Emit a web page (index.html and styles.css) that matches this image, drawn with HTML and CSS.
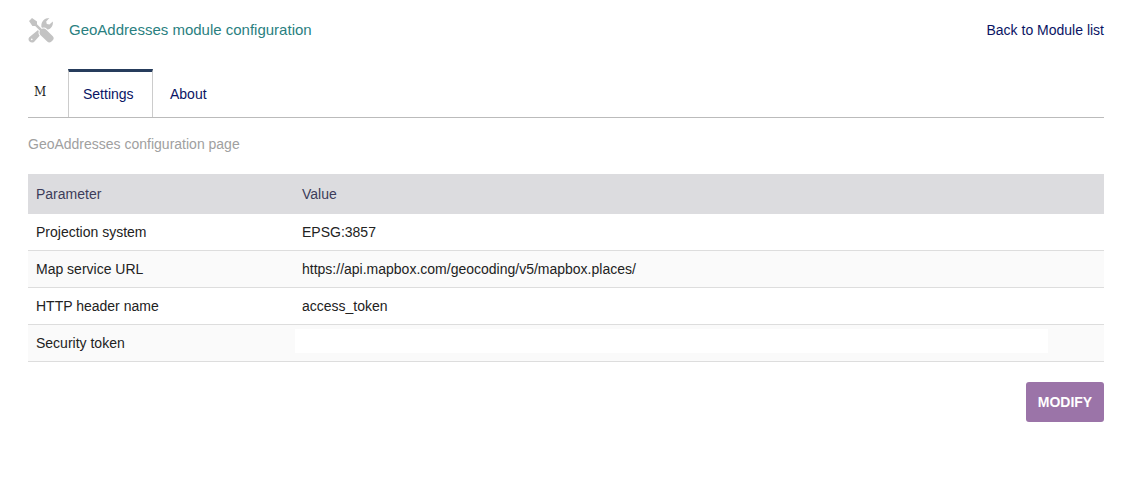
FILE: index.html
```
<!doctype html>
<html lang="en">
<head>
    <meta charset="utf-8">
    <meta name="viewport" content="width=device-width, initial-scale=1">
    <title>GeoAddresses module configuration</title>
    <link rel="stylesheet" href="styles.css">
</head>
<body>
    <div class="page-title">
        <svg class="title-icon" width="26" height="26" viewBox="0 0 26 26" aria-hidden="true">
            <!-- wrench -->
            <path class="tool" d="M1.2 20.2 L13.4 10.2 C12.8 5 16 1 21.4 1 L18.2 4.4 L18.8 7 L21.4 7.6 L24.8 4.4 C25.6 9.4 22 13.4 17 12.8 L6 25 C3 27 -1.2 23.6 1.2 20.2Z"/>
            <circle class="hole" cx="3.8" cy="22.4" r="0.8"/>
            <!-- screwdriver -->
            <path class="gap" d="M4 1 L9 4.4 V7.2 L13.8 12 C15.4 11.2 17 11.4 18 12.4 L24.8 19.2 C26 20.6 26 22 24.8 23.2 L23.2 24.8 C22 25.8 20.4 25.8 19.2 24.6 L12.4 18 C11.4 16.8 11.2 15.2 12 13.8 L7.2 9 H4.4 L1 4Z"/>
            <path class="tool" d="M4 1 L9 4.4 V7.2 L13.8 12 C15.4 11.2 17 11.4 18 12.4 L24.8 19.2 C26 20.6 26 22 24.8 23.2 L23.2 24.8 C22 25.8 20.4 25.8 19.2 24.6 L12.4 18 C11.4 16.8 11.2 15.2 12 13.8 L7.2 9 H4.4 L1 4Z"/>
        </svg>
        <h1>GeoAddresses module configuration</h1>
        <a class="back" href="#">Back to Module list</a>
    </div>

    <nav class="tabs">
        <span class="tabs-mark">M</span>
        <a class="tab tab-active" href="#" aria-current="page">Settings</a>
        <a class="tab" href="#">About</a>
    </nav>

    <p class="intro">GeoAddresses configuration page</p>

    <table class="params">
        <thead>
            <tr><th class="col-name" scope="col">Parameter</th><th scope="col">Value</th></tr>
        </thead>
        <tbody>
            <tr><td>Projection system</td><td>EPSG:3857</td></tr>
            <tr><td>Map service URL</td><td>https://api.mapbox.com/geocoding/v5/mapbox.places/</td></tr>
            <tr><td>HTTP header name</td><td>access_token</td></tr>
            <tr><td>Security token</td><td class="token"><div class="token-mask"></div></td></tr>
        </tbody>
    </table>

    <div class="actions">
        <button class="button" type="button">Modify</button>
    </div>
</body>
</html>
```
FILE: styles.css
```
body {
    margin: 0;
    padding: 17px 21px 20px 28px;
    background: #fff;
    color: #222;
    font: 14px/20px "Liberation Sans", Arial, sans-serif;
}
a {
    color: #0a1464;
    text-decoration: none;
}

/* title bar */
.page-title {
    display: flex;
    align-items: center;
    height: 26px;
}
.title-icon .tool {
    fill: #c3c3c3;
}
.title-icon .hole {
    fill: #fff;
}
.title-icon .gap {
    fill: none;
    stroke: #fff;
    stroke-width: 2;
}
.page-title h1 {
    margin: 0 0 0 15px;
    color: #2a7f7f;
    font-size: 15px;
    font-weight: normal;
}
.back {
    margin-left: auto;
}

/* tabs */
.tabs {
    display: flex;
    margin-top: 26px;
    border-bottom: 1px solid #bbb;
}
.tabs-mark {
    width: 40px;
    padding: 13px 0 0 6px;
    box-sizing: border-box;
    font-family: "DejaVu Serif", serif;
    font-size: 12px;
}
.tab {
    min-width: 85px;
    padding: 15px 14px 13px;
    border: solid transparent;
    border-width: 0 1px;
    box-sizing: border-box;
    margin-right: 2px;
}
.tab-active {
    padding-top: 12px;
    border-color: #ccc;
    border-top: 3px solid #263c5c;
}

.intro {
    margin: 16px 0 20px;
    color: #a0a0a0;
}

/* parameters */
.params {
    width: 100%;
    border-collapse: separate;
    border-spacing: 0;
    table-layout: fixed;
}
.params th {
    padding: 10px 8px;
    background: #dcdcdf;
    color: #3c3c5a;
    font-weight: normal;
    text-align: left;
}
.params .col-name {
    width: 250px;
}
.params td {
    padding: 8px;
    border-bottom: 1px solid #ddd;
}
.params tbody tr:nth-child(even) {
    background: #fafafa;
}
.params .token {
    padding: 4px 56px 8px 1px;
}
.token-mask {
    height: 24px;
    background: #fff;
}

.actions {
    display: flex;
    justify-content: flex-end;
    margin-top: 20px;
}
.button {
    min-width: 78px;
    padding: 10px;
    border: 0;
    border-radius: 3px;
    background: #9b74a8;
    color: #fff;
    font: bold 14px/20px "Liberation Sans", Arial, sans-serif;
    text-transform: uppercase;
    cursor: pointer;
}
```
